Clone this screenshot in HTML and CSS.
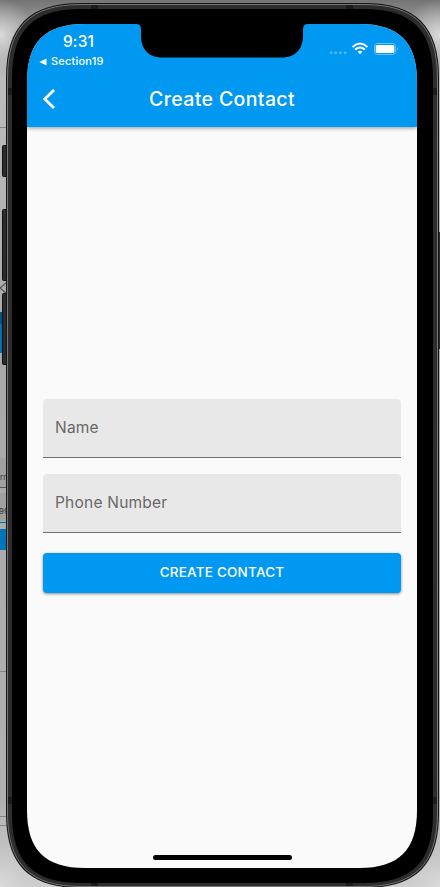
FILE: index.html
```html
<!DOCTYPE html>
<html lang="en">
<head>
<meta charset="utf-8">
<title>Create Contact</title>
<link rel="stylesheet" href="styles.css">
</head>
<body>
<svg class="backdrop" width="440" height="887" viewBox="0 0 440 887" aria-hidden="true">
  <defs>
    <linearGradient id="desk" x1="0" y1="0" x2="0" y2="1">
      <stop offset="0" stop-color="#747474"/><stop offset=".03" stop-color="#a0a0a0"/><stop offset=".09" stop-color="#bcbcbc"/><stop offset=".16" stop-color="#b8b8b8"/><stop offset=".4" stop-color="#a8a8a8"/><stop offset=".9" stop-color="#b0b0b0"/><stop offset="1" stop-color="#d0d0d0"/>
    </linearGradient>
    <radialGradient id="glow"><stop offset="0" stop-color="#dcdcdc"/><stop offset="1" stop-color="#c0c0c0" stop-opacity="0"/></radialGradient>
  </defs>
  <rect width="440" height="887" fill="url(#desk)"/>
  <circle cx="0" cy="35" r="36" fill="url(#glow)"/>
  <circle cx="440" cy="35" r="36" fill="url(#glow)"/>
  <circle cx="0" cy="887" r="48" fill="url(#glow)"/>
  <circle cx="440" cy="887" r="48" fill="url(#glow)"/>
  <path d="M0 127.500h7M0 671.500h7M0 816.500h7M0 825.500h7" stroke="#858585"/>
  <path d="M6 283L0 288L6 293" fill="none" stroke="#555" stroke-width="1.300"/>
  <rect y="312" width="3" height="12" fill="#00568b"/>
  <rect y="324" width="3" height="29" fill="#0071b5"/>
  <rect y="458" width="7" height="29" fill="#a0a0a0"/>
  <rect y="493" width="7" height="28" fill="#a0a0a0"/>
  <path d="M0 487.500h7" stroke="#555"/>
  <path d="M0 522.500h7" stroke="#0071b5"/>
  <rect y="529" width="7" height="21" fill="#0075ba"/>
  <text class="peek" x="0" y="480">rn</text>
  <text class="peek" x="-1" y="514">99</text>
  <g fill="#2b2b2b" stroke="#111">
    <rect x="2.500" y="145.500" width="8" height="31" rx="1"/>
    <rect x="2.500" y="209.500" width="8" height="71" rx="1"/>
    <rect x="2.500" y="293.500" width="8" height="71" rx="1"/>
    <rect x="438.500" y="232.500" width="8" height="116" rx="1"/>
  </g>
  <path d="M6 78C6 26 29 3 81 3H364C416 3 439 26 439 78V813C439 865 416 888 364 888H81C29 888 6 865 6 813Z" fill="#141414"/>
  <path d="M7.500 78C7.500 27 30 4.500 81 4.500H364C415 4.500 437.500 27 437.500 78V813C437.500 864 415 886.500 364 886.500H81C30 886.500 7.500 864 7.500 813Z" fill="#2d2d2d" stroke="#777"/>
  <path d="M91 5h7v5h-7zM346 5h7v5h-7zM91 882h7v4h-7zM346 882h7v4h-7zM8 88h5v7H8zM432 88h5v7h-5zM8 797h5v7H8zM432 797h5v7h-5z" fill="#1b1b1b"/>
  <path d="M12 78C12 30 33 9 81 9H364C412 9 433 30 433 78V814C433 862 412 883 364 883H81C33 883 12 862 12 814Z"/>
</svg>
<main class="screen">
  <header class="top">
    <div class="status">
      <div class="status-left">
        <div class="time">9:31</div>
        <div class="return"><svg width="8" height="8" viewBox="0 0 8 8"><path d="M.3 4L7.500 .5V7.500Z" fill="#fff"/></svg><span>Section19</span></div>
      </div>
      <svg class="indicators" width="71" height="14" viewBox="0 0 71 14">
        <g fill="#fff" fill-opacity=".3"><circle cx="3" cy="10.700" r="1.500"/><circle cx="7.700" cy="10.700" r="1.500"/><circle cx="12.400" cy="10.700" r="1.500"/><circle cx="17.100" cy="10.700" r="1.500"/></g>
        <g fill="none" stroke="#fff" stroke-width="2.100"><path d="M24.600 4.900Q32 -1.900 39.400 4.900"/><path d="M27.200 7.600Q32 3.400 36.800 7.600"/></g>
        <path d="M29.600 9.700Q32 7.800 34.400 9.700L32 12.200Z" fill="#fff"/>
        <rect x="46.500" y="1.500" width="21" height="11" rx="3" fill="none" stroke="#fff" stroke-opacity=".4"/>
        <rect x="47.700" y="2.900" width="18.600" height="8.200" rx="1.500" fill="#fff"/>
        <path d="M69 5Q71 6.900 69 8.800Z" fill="#fff" fill-opacity=".5"/>
      </svg>
    </div>
    <div class="bar">
      <svg width="14" height="22" viewBox="0 0 14 22"><path d="M12 2L2.800 11L12 20" fill="none" stroke="#fff" stroke-width="2.800"/></svg>
      <h1>Create Contact</h1>
    </div>
  </header>
  <form class="form">
    <label class="field">Name</label>
    <label class="field">Phone Number</label>
    <button class="submit" type="button">CREATE CONTACT</button>
  </form>
  <svg class="notch" width="172" height="34" viewBox="0 0 172 34"><path d="M0 0Q5 0 5 5V12C5 25 13 33.500 26 33.500H146C159 33.500 167 25 167 12V5Q167 0 172 0Z"/></svg>
  <div class="home"></div>
</main>
</body>
</html>
```
FILE: styles.css
```css
* { box-sizing: border-box; }
body {
  margin: 0;
  width: 440px;
  height: 887px;
  padding: 24px 23px 19px 27px;
  position: relative;
  overflow: hidden;
  font-family: Inter, sans-serif;
}
svg { display: block; }
.backdrop { position: absolute; inset: 0; }
.peek { font-size: 8px; fill: #333; }
.screen {
  position: relative;
  width: 390px;
  height: 844px;
  display: flex;
  flex-direction: column;
  background: #fafafa;
  clip-path: path("M0 58C0 18 18 0 58 0H332C372 0 390 18 390 58V786C390 826 372 844 332 844H58C18 844 0 826 0 786Z");
}
.top {
  height: 103px;
  background: #0098f0;
  color: #fff;
  box-shadow: 0 1px 4px rgba(0, 0, 0, .4);
}
.status {
  height: 47px;
  display: flex;
  justify-content: space-between;
  padding: 9px 18px 0 12px;
}
.status-left { width: 80px; }
.time {
  padding-left: 24px;
  font-size: 15.500px;
  font-weight: 500;
  line-height: 18px;
  letter-spacing: .1px;
}
.return {
  display: flex;
  align-items: center;
  gap: 4px;
  margin-top: 3px;
  font-size: 11px;
  font-weight: 500;
  line-height: 15px;
  letter-spacing: .2px;
}
.indicators { margin-top: 9px; }
.bar {
  height: 56px;
  display: grid;
  grid-template-columns: 14px 1fr 14px;
  align-items: center;
  padding: 0 15px;
}
h1 {
  margin: 0;
  text-align: center;
  font-size: 19.500px;
  line-height: 24px;
  font-weight: 500;
  letter-spacing: .37px;
}
.form {
  flex: 1;
  display: flex;
  flex-direction: column;
  padding: 272px 16px 0;
}
.field {
  height: 59px;
  flex: none;
  margin-bottom: 16px;
  padding-left: 12px;
  background: #e8e8e8;
  border-bottom: 1px solid #707070;
  border-radius: 4px 4px 0 0;
  color: #696969;
  font-size: 15.500px;
  letter-spacing: .22px;
  line-height: 58px;
}
.submit {
  height: 40px;
  margin-top: 4px;
  border: 0;
  border-radius: 4px;
  background: #0098f0;
  box-shadow: 0 1px 3px rgba(0, 0, 0, .45);
  color: #fff;
  font: 500 13.500px/38px Inter, sans-serif;
  letter-spacing: .22px;
  padding: 0 0 2px;
}
.notch { position: absolute; top: 0; left: 109px; }
.home {
  position: absolute;
  bottom: 8px;
  left: 126px;
  width: 139px;
  height: 5px;
  border-radius: 3px;
  background: #000;
}
```
